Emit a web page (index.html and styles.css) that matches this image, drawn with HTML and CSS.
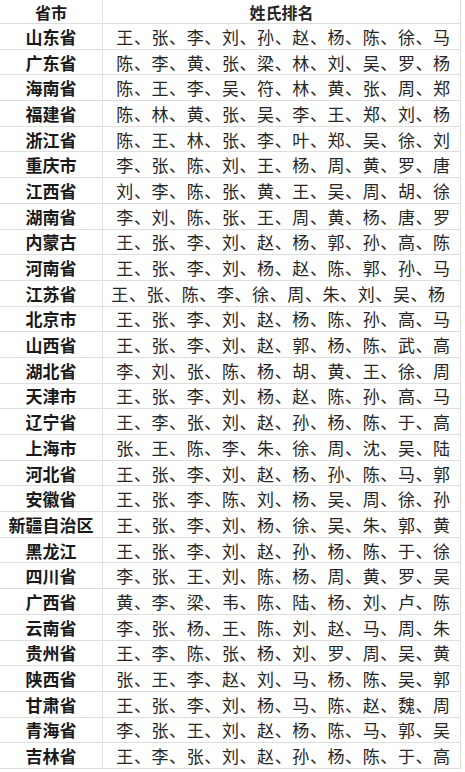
FILE: index.html
```html
<!DOCTYPE html>
<html lang="zh">
<head>
<meta charset="utf-8">
<title>各省姓氏排名</title>
<link rel="stylesheet" href="styles.css">
</head>
<body>
<div class="table">
  <div class="cell prov head">省市</div><div class="cell names head">姓氏排名</div>
  <div class="cell prov">山东省</div><div class="cell names">王、张、李、刘、孙、赵、杨、陈、徐、马</div>
  <div class="cell prov">广东省</div><div class="cell names">陈、李、黄、张、梁、林、刘、吴、罗、杨</div>
  <div class="cell prov">海南省</div><div class="cell names">陈、王、李、吴、符、林、黄、张、周、郑</div>
  <div class="cell prov">福建省</div><div class="cell names">陈、林、黄、张、吴、李、王、郑、刘、杨</div>
  <div class="cell prov">浙江省</div><div class="cell names">陈、王、林、张、李、叶、郑、吴、徐、刘</div>
  <div class="cell prov">重庆市</div><div class="cell names">李、张、陈、刘、王、杨、周、黄、罗、唐</div>
  <div class="cell prov">江西省</div><div class="cell names">刘、李、陈、张、黄、王、吴、周、胡、徐</div>
  <div class="cell prov">湖南省</div><div class="cell names">李、刘、陈、张、王、周、黄、杨、唐、罗</div>
  <div class="cell prov">内蒙古</div><div class="cell names">王、张、李、刘、赵、杨、郭、孙、高、陈</div>
  <div class="cell prov">河南省</div><div class="cell names">王、张、李、刘、杨、赵、陈、郭、孙、马</div>
  <div class="cell prov">江苏省</div><div class="cell names shift">王、张、陈、李、徐、周、朱、刘、吴、杨</div>
  <div class="cell prov">北京市</div><div class="cell names">王、张、李、刘、赵、杨、陈、孙、高、马</div>
  <div class="cell prov">山西省</div><div class="cell names">王、张、李、刘、赵、郭、杨、陈、武、高</div>
  <div class="cell prov">湖北省</div><div class="cell names">李、刘、张、陈、杨、胡、黄、王、徐、周</div>
  <div class="cell prov">天津市</div><div class="cell names">王、张、李、刘、杨、赵、陈、孙、高、马</div>
  <div class="cell prov">辽宁省</div><div class="cell names">王、李、张、刘、赵、孙、杨、陈、于、高</div>
  <div class="cell prov">上海市</div><div class="cell names">张、王、陈、李、朱、徐、周、沈、吴、陆</div>
  <div class="cell prov">河北省</div><div class="cell names">王、张、李、刘、赵、杨、孙、陈、马、郭</div>
  <div class="cell prov">安徽省</div><div class="cell names">王、张、李、陈、刘、杨、吴、周、徐、孙</div>
  <div class="cell prov">新疆自治区</div><div class="cell names">王、张、李、刘、杨、徐、吴、朱、郭、黄</div>
  <div class="cell prov">黑龙江</div><div class="cell names">王、张、李、刘、赵、孙、杨、陈、于、徐</div>
  <div class="cell prov">四川省</div><div class="cell names">李、张、王、刘、陈、杨、周、黄、罗、吴</div>
  <div class="cell prov">广西省</div><div class="cell names">黄、李、梁、韦、陈、陆、杨、刘、卢、陈</div>
  <div class="cell prov">云南省</div><div class="cell names">李、张、杨、王、陈、刘、赵、马、周、朱</div>
  <div class="cell prov">贵州省</div><div class="cell names">王、李、陈、张、杨、刘、罗、周、吴、黄</div>
  <div class="cell prov">陕西省</div><div class="cell names">张、王、李、赵、刘、马、杨、陈、吴、郭</div>
  <div class="cell prov">甘肃省</div><div class="cell names">王、张、李、刘、杨、马、陈、赵、魏、周</div>
  <div class="cell prov">青海省</div><div class="cell names">李、张、王、刘、赵、杨、陈、马、郭、吴</div>
  <div class="cell prov">吉林省</div><div class="cell names">王、李、张、刘、赵、孙、杨、陈、于、高</div>
</div>
</body>
</html>
```

FILE: styles.css
```css
html, body {
  margin: 0;
  padding: 0;
  background: #ffffff;
}

body {
  width: 465px;
  height: 772px;
  overflow: hidden;
  font-family: "Noto Sans CJK SC", "Noto Sans", sans-serif;
  color: #1e1e1e;
}

.table {
  display: grid;
  grid-template-columns: 103px 357px;
  grid-template-rows: 24px repeat(29, 25.7px);
  width: 460px;
  border-right: 1px solid #dcdcdc;
}

.cell {
  display: flex;
  align-items: center;
  justify-content: center;
  border-bottom: 1px solid #dedede;
  white-space: nowrap;
  overflow: hidden;
  line-height: 1;
}

.prov {
  font-size: 17px;
  font-weight: 700;
  border-right: 1px solid #e4e4e4;
  color: #1a1a1a;
}

.names {
  font-size: 17px;
  letter-spacing: 0.6px;
  color: #262626;
  padding-left: 4px;
}

.head {
  font-size: 16px;
  font-weight: 700;
}

.names.head {
  letter-spacing: 0;
  padding-left: 0;
}

.shift {
  padding-left: 0;
  padding-right: 6px;
}
```
